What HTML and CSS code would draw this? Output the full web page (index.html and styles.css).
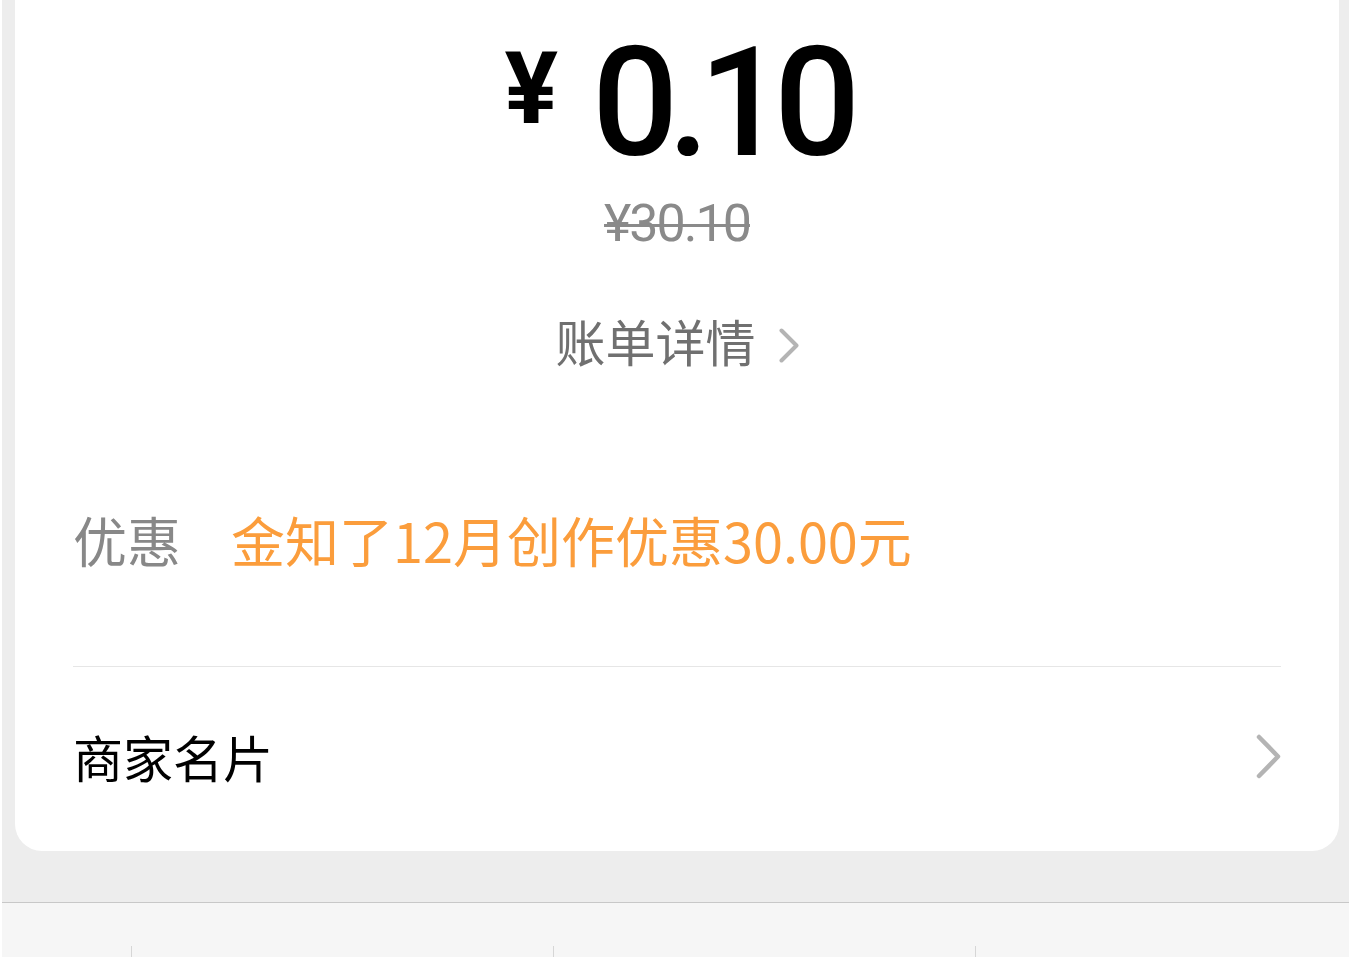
FILE: index.html
```html
<!DOCTYPE html>
<html lang="zh-CN">
<head>
    <meta charset="UTF-8">
    <meta name="viewport" content="width=device-width, initial-scale=1.0">
    <title>支付成功</title>
    <link rel="stylesheet" href="styles.css">
</head>
<body>
    <div class="phone">
        <div class="card">
            <div class="amount">
                <span class="amount-sign">¥</span>
                <span class="amount-value">0.10</span>
            </div>
            <div class="original">¥30.10</div>
            <div class="bill-link">
                <span>账单详情</span>
                <svg class="bill-arrow" width="20" height="35" viewBox="0 0 20 35">
                    <polyline points="2.5,2.5 17.5,17.5 2.5,32.5" fill="none" stroke="#b4b4b4" stroke-width="4" stroke-linecap="round" stroke-linejoin="round"/>
                </svg>
            </div>
            <div class="discount">
                <span class="discount-label">优惠</span>
                <span class="discount-value">金知了12月创作优惠30.00元</span>
            </div>
            <div class="divider"></div>
            <div class="merchant">
                <span>商家名片</span>
                <svg width="25" height="45" viewBox="0 0 25 45">
                    <polyline points="3,3 22,22.5 3,42" fill="none" stroke="#b4b4b4" stroke-width="4.5" stroke-linecap="round" stroke-linejoin="round"/>
                </svg>
            </div>
        </div>
        <div class="gap"></div>
        <div class="tabbar">
            <div class="tab first"></div>
            <div class="tab"></div>
            <div class="tab"></div>
            <div class="tab"></div>
        </div>
    </div>
</body>
</html>
```

FILE: styles.css
```css
body {
    margin: 0;
    background-color: #fff;
    font-family: "Noto Sans CJK SC", "Noto Sans", sans-serif;
}
.phone {
    margin: 0 2px;
    height: 957px;
    background-color: #ededed;
    display: flex;
    flex-direction: column;
    overflow: hidden;
}
.card {
    margin: 0 10px 0 13px;
    padding: 0 58px 65px;
    background-color: #fff;
    border-radius: 0 0 27px 27px;
}
.amount {
    display: flex;
    justify-content: center;
    align-items: flex-start;
    padding-top: 25px;
    font-family: Roboto, "Liberation Sans", sans-serif;
    color: #000;
}
.amount-sign {
    font-size: 100px;
    font-weight: 700;
    line-height: 1;
    margin-top: 14px;
    margin-right: 34px;
}
.amount-value {
    font-size: 152px;
    font-weight: 500;
    line-height: 156px;
    letter-spacing: -11px;
}
.original {
    margin-top: 17px;
    text-align: center;
    font-family: Roboto, "Liberation Sans", sans-serif;
    font-size: 52px;
    line-height: 1;
    letter-spacing: -2px;
    color: #8a8a8a;
    text-decoration: line-through;
    text-decoration-thickness: 3px;
}
.bill-link {
    margin-top: 60px;
    height: 60px;
    display: flex;
    justify-content: center;
    align-items: center;
    gap: 19px;
    font-size: 50px;
    line-height: 60px;
    color: #707070;
}
.bill-link span {
    margin-right: 4px;
}
.bill-arrow {
    margin-top: 10px;
}
.discount {
    margin-top: 140px;
    height: 60px;
    display: flex;
    align-items: center;
    gap: 50px;
    font-size: 54px;
    line-height: 60px;
}
.discount-label {
    color: #888;
}
.discount-value {
    color: #fb9d3c;
}
.divider {
    margin-top: 96px;
    height: 1px;
    background-color: #e6e6e6;
}
.merchant {
    margin-top: 59px;
    height: 60px;
    display: flex;
    justify-content: space-between;
    align-items: center;
    font-size: 50px;
    line-height: 60px;
    color: #000;
}
.gap {
    height: 51px;
}
.tabbar {
    flex: 1;
    border-top: 1px solid #c8c8c8;
    background-color: #f6f6f6;
    display: grid;
    grid-template-columns: 129px 422px 422px 1fr;
    padding-top: 43px;
}
.tab {
    border-left: 1px solid #d6d6d6;
}
.tab.first {
    border-left: none;
}
```
